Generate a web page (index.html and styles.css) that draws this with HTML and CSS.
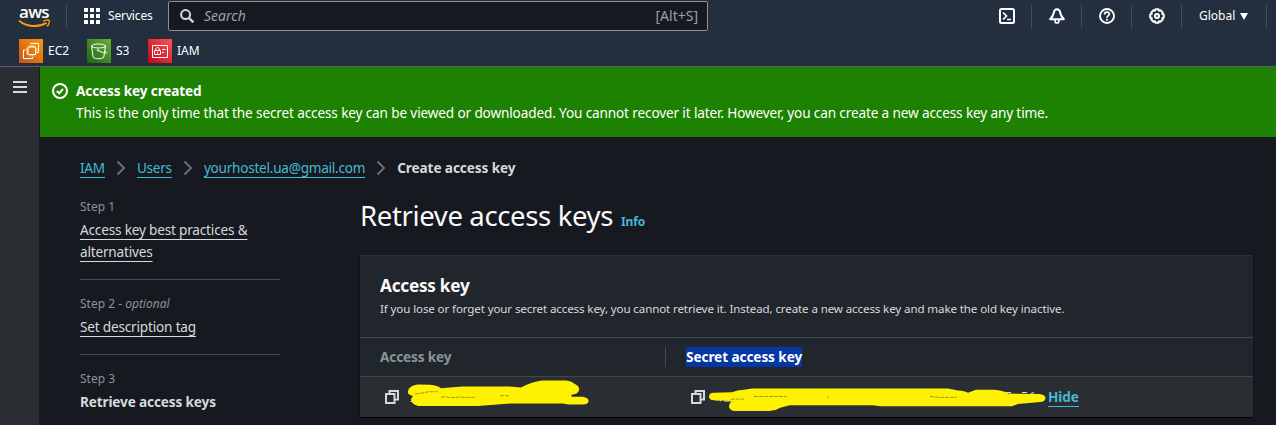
FILE: index.html
```html
<!DOCTYPE html>
<html lang="en">
<head>
<meta charset="utf-8">
<title>Create access key | IAM</title>
<link rel="stylesheet" href="styles.css">
</head>
<body>
<header class="topnav">
  <div class="nav-row">
    <a class="logo"><span class="logo-word">aws</span>
      <svg class="logo-smile" width="33" height="10" viewBox="0 0 33 10"><path d="M1 1.8C9 8.2 20 8.6 28.5 3.8" fill="none" stroke="#f90" stroke-width="1.9"/><path d="M25.3 2.2C28 .6 31 1 31.3 1.6S30.800 6 29 7.600" fill="none" stroke="#f90" stroke-width="1.400"/></svg>
    </a>
    <i class="sep sep-logo"></i>
    <svg class="grid-icon" width="16" height="16" viewBox="0 0 16 16" fill="#fff"><path d="M0 0h4v4H0zM6 0h4v4H6zM12 0h4v4h-4zM0 6h4v4H0zM6 6h4v4H6zM12 6h4v4h-4zM0 12h4v4H0zM6 12h4v4H6zM12 12h4v4h-4z"/></svg>
    <span class="services">Services</span>
    <div class="search">
      <svg width="14" height="14" viewBox="0 0 14 14" fill="none" stroke="#d5dbdb" stroke-width="2"><circle cx="5.600" cy="5.600" r="4.500"/><path d="M9 9l4.300 4.300" stroke-width="2.400"/></svg>
      <span class="search-hint">Search</span><span class="search-key">[Alt+S]</span>
    </div>
    <div class="tools">
      <span class="tool"><svg width="16" height="16" viewBox="0 0 16 16" fill="none" stroke="#fff" stroke-width="2"><rect x="1" y="1" width="14" height="14" rx="1.500"/><path d="M4 4.500L7.500 8 4 11.500M8 11.500h4" stroke-width="1.700"/></svg></span>
      <span class="tool"><svg width="16" height="16" viewBox="0 0 16 16" fill="none" stroke="#fff" stroke-width="2" stroke-linejoin="round"><path d="M8 1.300C5.800 1.300 5 3 4.700 5 4.300 7.500 3.400 8.800 1.200 11.200h13.600C12.600 8.800 11.700 7.500 11.300 5 11 3 10.200 1.300 8 1.300z"/><path d="M6.200 12v1.200a1.800 1.800 0 0 0 3.600 0V12" stroke-width="1.700"/></svg></span>
      <span class="tool"><svg width="16" height="16" viewBox="0 0 16 16" fill="none" stroke="#fff" stroke-width="1.900"><circle cx="8" cy="8" r="7"/><path d="M5.600 6.500C5.600 3.300 10.500 3.500 10.400 6.200 10.300 7.700 8 7.700 8 9.700M8 10.800v1.900" stroke-width="1.700"/></svg></span>
      <span class="tool"><svg width="16" height="16" viewBox="0 0 16 16" fill="none" stroke="#fff" stroke-width="2" stroke-linejoin="round"><path d="M6.500 1.200h3l.5 1.500 1.500-.5 2.200 2.200-.5 1.500 1.600.6v3l-1.600.6.5 1.500-2.200 2.200-1.500-.5-.5 1.500h-3L6 13.300l-1.500.5-2.200-2.200.5-1.500-1.600-.6v-3l1.600-.6-.5-1.500 2.200-2.200 1.500.5z"/><circle cx="8" cy="8" r="2"/></svg></span>
      <span class="region">Global <svg width="8" height="7" viewBox="0 0 8 7"><path d="M0 0h8L4 7z" fill="#fff"/></svg></span>
    </div>
  </div>
  <div class="fav-row">
    <span class="fav fav-ec2"><svg width="24" height="24" viewBox="0 0 24 24" fill="none" stroke="#fff"><defs><linearGradient id="o" x1="0" y1="1" x2="1" y2="0"><stop stop-color="#c8511b"/><stop offset="1" stop-color="#f90"/></linearGradient></defs><path d="M0 0h24v24H0z" fill="url(#o)" stroke="none"/><rect x="9" y="8" width="7.500" height="7.500"/><path d="M11 6v2M13 6v2M15 6v2M11 15.500v2M13 15.500v2M15 15.500v2M7 10h2M7 12h2M7 14h2M16.500 10h2M16.500 12h2M16.500 14h2" stroke-width=".8"/><path d="M11.500 5V4.500h8v9H18M6.500 11H4.500v8.500h9V18"/></svg>EC2</span>
    <span class="fav fav-s3"><svg width="24" height="24" viewBox="0 0 24 24" fill="none" stroke="#fff"><defs><linearGradient id="g" x1="0" y1="1" x2="1" y2="0"><stop stop-color="#1b660f"/><stop offset="1" stop-color="#6cae3e"/></linearGradient></defs><path d="M0 0h24v24H0z" fill="url(#g)" stroke="none"/><ellipse cx="11.500" cy="7" rx="7" ry="2"/><path d="M4.500 7l1.700 11.200c1.500 2 9.200 2 10.600 0L18.500 7M11.500 11.500c3 1.800 7 3.200 8 2.400.6-.7-.9-1.600-2-2"/><circle cx="11" cy="11.300" r=".7"/></svg>S3</span>
    <span class="fav fav-iam"><svg width="24" height="24" viewBox="0 0 24 24" fill="none" stroke="#fff"><defs><linearGradient id="r" x1="0" y1="1" x2="1" y2="0"><stop stop-color="#bd0816"/><stop offset="1" stop-color="#ff5252"/></linearGradient></defs><path d="M0 0h24v24H0z" fill="url(#r)" stroke="none"/><path d="M4.500 6.500h15v12h-15z"/><path d="M6.500 11.500h6v4h-6zM7.800 11.500V10c0-2 3.400-2 3.400 0v1.500M9.500 13v1.500M14 10.500h3.500M14 13.500h2"/></svg>IAM</span>
  </div>
</header>
<div class="shell">
  <aside class="rail"><i></i><i></i><i></i></aside>
  <main class="main">
    <section class="flash">
      <svg width="16" height="16" viewBox="0 0 16 16" fill="none" stroke="#fff" stroke-width="2"><circle cx="8" cy="8" r="7"/><path d="M4.800 8l2.400 2.300L11 6"/></svg>
      <div><div class="flash-title">Access key created</div><div class="flash-text">This is the only time that the secret access key can be viewed or downloaded. You cannot recover it later. However, you can create a new access key any time.</div></div>
    </section>
    <nav class="crumbs">
      <a class="crumb">IAM</a><svg class="chev" width="10" height="16" viewBox="0 0 10 16"><path d="M1.500 1.500L8 8l-6.500 6.500"/></svg>
      <a class="crumb">Users</a><svg class="chev" width="10" height="16" viewBox="0 0 10 16"><path d="M1.500 1.500L8 8l-6.500 6.500"/></svg>
      <a class="crumb">yourhostel.ua@gmail.com</a><svg class="chev" width="10" height="16" viewBox="0 0 10 16"><path d="M1.500 1.500L8 8l-6.500 6.500"/></svg>
      <span class="crumb-now">Create access key</span>
    </nav>
    <div class="content">
      <ol class="steps">
        <li class="step"><div class="step-no">Step 1</div><a class="step-link">Access key best practices &amp;<br>alternatives</a></li>
        <li class="step"><div class="step-no">Step 2 - <em>optional</em></div><a class="step-link">Set description tag</a></li>
        <li class="step"><div class="step-no">Step 3</div><b class="step-now">Retrieve access keys</b></li>
      </ol>
      <div class="panel">
        <div class="heading"><h1>Retrieve access keys</h1><a class="info">Info</a></div>
        <section class="card">
          <div class="card-head"><h2>Access key</h2><p>If you lose or forget your secret access key, you cannot retrieve it. Instead, create a new access key and make the old key inactive.</p></div>
          <div class="cols"><div class="col-a">Access key</div><div class="col-b"><span class="selected">Secret access key</span></div></div>
          <div class="vals">
            <svg class="copy" width="14" height="14" viewBox="0 0 14 14"><path d="M1 4h8.500v9H1zM4.500 4V1H13v8.500H9.500"/></svg>
            <svg class="copy" width="14" height="14" viewBox="0 0 14 14"><path d="M1 4h8.500v9H1zM4.500 4V1H13v8.500H9.500"/></svg>
            <a class="hide">Hide</a>
            <svg class="marker" width="893" height="40" viewBox="360 377 893 40">
              <path class="trace" d="M410.500 401.500h3M1006 392.500h5M1022 392.500h5M1031 393.500l3-1M717 393v8m0-4l4 4M724 401h9"/>
              <path class="ink" d="M408 391Q409 385.500 418 384.500L430 384.700Q438 385.500 441 388.300L462 386.600H509L521 387.500Q531 382 542 380.600H565Q571 381 574 383.500Q580 386 579 390.500Q578 394 571 395L572 396.800H583Q589 398 588.500 401.500Q588 404.500 583 404.500H568L563 403.500H511L478 406H418Q411 404 411 399L413 396Q407 395 408 391Z"/>
              <path class="ink" d="M709 396.500Q709 393 714 392.700L732 392.300Q737 390 744 389.800L752 388.500H948L958 390.500Q965 391 968 392.800L976 389.800H994Q1003 390.500 1008 393.500L1040 394Q1045.500 395 1045.500 398Q1045 402 1040 402L1018 404L1012 406.200H880L873 405.300H790L781 407.500Q775 411 769 411H734Q729 410 729 406Q729 403 732 401L714 400.300Q709 400 709 396.500Z"/>
              <path class="trace-dark" d="M415 394l6-.8 8-1.500 9 0M441 397.500l4-1 4 1h6l5-.5 5 .5 11-.3M500 396l4-.5 5 .3M731 399.500l5-.500 8 .2M754 396.500h33M827 397h2M930 396.500l10 1 17-.3"/>
            </svg>
          </div>
        </section>
      </div>
    </div>
  </main>
</div>
</body>
</html>
```
FILE: styles.css
```css
* { box-sizing: border-box; }
body { margin: 0; height: 425px; overflow: hidden; background: #16191f; color: #d5dbdb; font: 13.6px/22px "Noto Sans", "Open Sans", sans-serif; letter-spacing: -.14px; }
svg { display: block; flex: none; }
h1, h2, p, ol { margin: 0; padding: 0; }

.topnav { height: 67px; background: #232f3e; border-bottom: 1px solid #5a616b; color: #fff; font-size: 12px; }
.nav-row { display: flex; align-items: center; height: 32px; }
.logo { display: flex; flex-direction: column; width: 33px; height: 26px; margin-left: 18px; margin-top: 4px; }
.logo-word { font: 600 17px/14px "Open Sans", sans-serif; height: 15px; padding-left: 1px; letter-spacing: -.7px; }
.logo-smile { margin-top: -1px; }
.sep { width: 1px; height: 22px; background: #414d5c; }
.sep-logo { margin: 0 17px 0 15px; }
.services { width: 68px; padding-left: 8px; }
.search { display: flex; align-items: center; width: 540px; height: 30px; padding: 0 9px 0 11px; border: 1px solid #8d9496; border-radius: 2px; background: #16191f; color: #95a5a6; }
.search-hint { margin-left: 10px; font-size: 14px; font-style: italic; letter-spacing: 0; }
.search-key { margin-left: auto; font-size: 14px; letter-spacing: 0; }
.tools { display: flex; align-items: center; margin-left: 274px; }
.tool { display: flex; width: 50px; height: 23px; align-items: center; padding-left: 17px; border-right: 1px solid #414d5c; }
.region { display: flex; align-items: center; gap: 5px; width: 85px; height: 23px; padding-left: 17px; border-right: 1px solid #414d5c; letter-spacing: 0; }
.fav-row { display: flex; height: 34px; padding: 7px 0 0 19px; letter-spacing: 0; }
.fav { display: flex; align-items: center; height: 24px; gap: 5px; }
.fav-ec2 { width: 68px; }
.fav-s3 { width: 61px; }

.shell { display: flex; height: 358px; }
.rail { display: flex; flex-direction: column; align-items: center; gap: 3px; width: 40px; padding-top: 14px; background: #2a2e33; box-shadow: inset -1px 0 #1c2025; }
.rail i { width: 14px; height: 2px; background: #d5dbdb; }
.main { flex: 1; min-width: 0; }
.flash { display: flex; gap: 8px; height: 70px; padding: 13px 12px; background: #1d8102; color: #fff; white-space: nowrap; }
.flash svg { margin-top: 3px; }
.flash-title { font-weight: 700; }

.crumbs { display: flex; align-items: center; height: 22px; margin: 20px 0 0 40px; letter-spacing: -.25px; }
.crumb { height: 20px; line-height: 20px; color: #44b9d6; border-bottom: 1px solid #44b9d6; white-space: nowrap; }
.chev { margin: 0 11px 0 11px; fill: none; stroke: #687078; stroke-width: 2; }
.crumb-now { font-weight: 700; letter-spacing: -.1px; }

.content { display: flex; gap: 80px; padding-left: 40px; }
.steps { width: 200px; padding-top: 17px; list-style: none; }
.step { border-bottom: 1px solid #414d5c; padding-bottom: 16px; margin-bottom: 13px; }
.step:last-child { border: 0; }
.step-no { font-size: 12px; line-height: 22px; padding-bottom: 1px; color: #879596; letter-spacing: 0; }
.step-link { text-decoration: underline; text-decoration-thickness: 1px; text-underline-offset: 4px; text-decoration-skip-ink: none; white-space: nowrap; letter-spacing: -.19px; }

.panel { width: 893px; padding-top: 19px; }
.heading { display: flex; align-items: baseline; gap: 8px; height: 57px; }
h1 { color: #fafafa; font-size: 27.5px; font-weight: 400; line-height: 36px; letter-spacing: -.36px; }
.info { font-size: 12px; font-weight: 700; color: #44b9d6; }
.card { background: #21252c; border-top: 1px solid #2a2e33; box-shadow: 0 1px 1px #000; }
.card-head { height: 81px; padding: 19px 20px 0; white-space: nowrap; }
h2 { color: #fafafa; font-size: 17.2px; line-height: 22px; letter-spacing: -.25px; }
.card-head p { font-size: 11.6px; line-height: 22px; padding-top: 1px; letter-spacing: -.13px; }
.cols { display: flex; height: 40px; border: solid #414750; border-width: 1px 0; font-weight: 700; padding-top: 9px; }
.col-a { width: 306px; height: 20px; padding-left: 20px; line-height: 20px; border-right: 1px solid #414d5c; color: #879596; }
.col-b { padding-left: 20px; line-height: 20px; }
.selected { display: inline-block; background: #0536a3; color: #fff; height: 20px; letter-spacing: -.08px; }
.vals { position: relative; height: 40px; display: grid; grid-template-columns: 306px 357px auto; align-items: center; padding-left: 25px; background: #2a2e33; }
.copy { fill: none; stroke: #d5dbdb; stroke-width: 2; }
.hide { justify-self: start; height: 20px; line-height: 20px; font-weight: 700; color: #44b9d6; border-bottom: 1px solid #44b9d6; }
.marker { position: absolute; left: 0; top: 0; }
.ink { fill: #fff200; }
.trace { fill: none; stroke: #d5dbdb; stroke-width: 1.200; }
.trace-dark { fill: none; stroke: #8a8418; stroke-width: .8; stroke-dasharray: 4 1; }
```
